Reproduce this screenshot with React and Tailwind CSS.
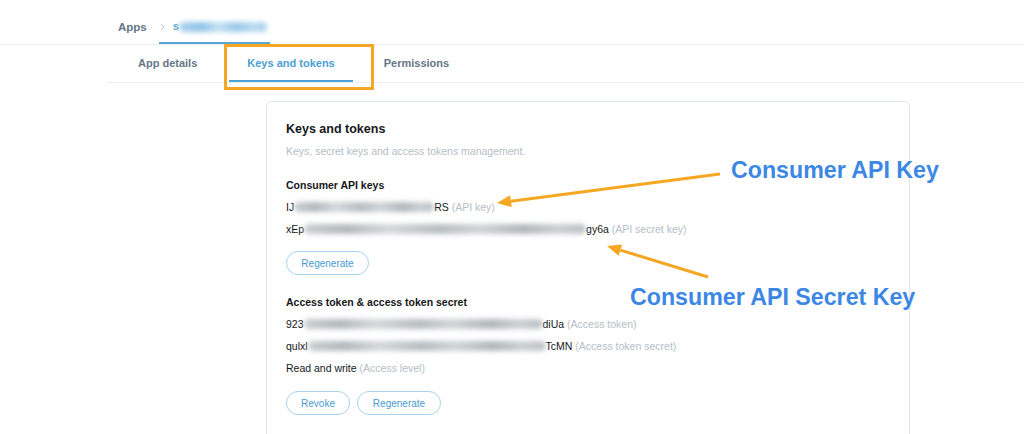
import React from "react";

const Blur = ({ w, light = false }) => (
  <span
    className={`inline-block h-[10px] align-[-1px] rounded-[5px] blur-[2.5px] ${
      light
        ? "bg-[linear-gradient(90deg,#a9d1ec,#8fc3e8_25%,#c4e0f3_45%,#98c8ea_65%,#bcdcf1_85%,#a3cdeb)]"
        : "bg-[linear-gradient(90deg,#c9ced1,#b3b9bd_15%,#d5d8db_30%,#b7bdc1_48%,#d0d4d7_62%,#b1b7bb_78%,#ccd0d3_90%,#bcc1c5)]"
    }`}
    style={{ width: w }}
  />
);

const Pill = ({ children, w }) => (
  <button
    className="h-[24px] rounded-full border border-[#a9d2ea] text-[10px] text-[#4a9ad0] flex items-center justify-center bg-white"
    style={{ width: w }}
  >
    {children}
  </button>
);

export default function App() {
  return (
    <div
      className="relative w-[1024px] h-[434px] overflow-hidden bg-white text-[#14171a]"
      style={{ fontFamily: '"Liberation Sans", Arial, sans-serif' }}
    >
      {/* breadcrumb */}
      <div className="h-[45px] border-b border-[#eceff1] flex items-stretch pl-[118px]">
        <div className="flex items-center pt-[12px] text-[11.5px] font-bold text-[#657786]">Apps</div>
        <div className="ml-[12px] w-[111px] flex items-center pt-[12px] border-b-2 border-[#5aa6d3]">
          <svg width="5" height="8" viewBox="0 0 5 8" className="ml-[1px]">
            <path d="M1 1 L4 4 L1 7" fill="none" stroke="#b8c2c9" strokeWidth="1" />
          </svg>
          <span className="ml-[8px] text-[11.5px] font-bold text-[#5aa6d3]">s</span>
          <Blur w="88px" light />
        </div>
      </div>

      {/* tabs */}
      <div className="ml-[107px] h-[38px] border-b border-[#eceff1] flex items-stretch pl-[13px] gap-[14px] text-[11px] font-bold">
        <div className="px-[18px] flex items-center text-[#657786]">App details</div>
        <div className="px-[18px] flex items-center text-[#4ba0d4] border-b-2 border-[#4ba0d4] pt-[2px]">Keys and tokens</div>
        <div className="px-[17px] flex items-center text-[#657786]">Permissions</div>
      </div>

      {/* card */}
      <div className="ml-[266px] mt-[18px] w-[644px] h-[340px] border border-[#e1e8ed] rounded-[5px] pt-[16px] px-[19px]">
        <div className="text-[12.5px] font-bold leading-[22px]">Keys and tokens</div>
        <div className="text-[10.5px] leading-[22px] text-[#b4bec6]">Keys, secret keys and access tokens management.</div>

        <div className="mt-[12px] text-[10.5px] font-bold leading-[22px]">Consumer API keys</div>
        <div className="text-[10.5px] leading-[22px] whitespace-nowrap">
          IJ<Blur w="140px" />RS <span className="text-[#b4bec6]">(API key)</span>
        </div>
        <div className="text-[10.5px] leading-[22px] whitespace-nowrap">
          xEp<Blur w="282px" />gy6a <span className="text-[#b4bec6]">(API secret key)</span>
        </div>
        <div className="mt-[11px] flex">
          <Pill w="83px">Regenerate</Pill>
        </div>

        <div className="mt-[16px] text-[10.5px] font-bold leading-[22px]">Access token &amp; access token secret</div>
        <div className="text-[10.5px] leading-[22px] whitespace-nowrap">
          923<Blur w="239px" />diUa <span className="text-[#b4bec6]">(Access token)</span>
        </div>
        <div className="text-[10.5px] leading-[22px] whitespace-nowrap">
          qulxl<Blur w="238px" />TcMN <span className="text-[#b4bec6]">(Access token secret)</span>
        </div>
        <div className="text-[10.5px] leading-[22px] whitespace-nowrap">
          Read and write <span className="text-[#b4bec6]">(Access level)</span>
        </div>
        <div className="mt-[12px] flex gap-[7px]">
          <Pill w="64px">Revoke</Pill>
          <Pill w="84px">Regenerate</Pill>
        </div>
      </div>

      {/* annotations */}
      <div className="absolute left-[224px] top-[44px] w-[150px] h-[46px] border-[3px] border-[#f5a623]" />

      <svg className="absolute left-0 top-0 pointer-events-none" width="1024" height="434">
        <line x1="720" y1="174" x2="510.9" y2="201.2" stroke="#f5a623" strokeWidth="3" />
        <polygon points="497,203 510.1,195.2 511.7,207.1" fill="#f5a623" />
        <line x1="708" y1="277" x2="620.4" y2="250.1" stroke="#f5a623" strokeWidth="3" />
        <polygon points="607,246 622.2,244.4 618.6,255.8" fill="#f5a623" />
      </svg>

      <div className="absolute left-[731px] top-[155px] text-[23.2px] leading-[30px] font-bold text-[#3d87e4] whitespace-nowrap">
        Consumer API Key
      </div>
      <div className="absolute left-[630px] top-[282px] text-[23.2px] leading-[30px] font-bold text-[#3d87e4] whitespace-nowrap">
        Consumer API Secret Key
      </div>
    </div>
  );
}
